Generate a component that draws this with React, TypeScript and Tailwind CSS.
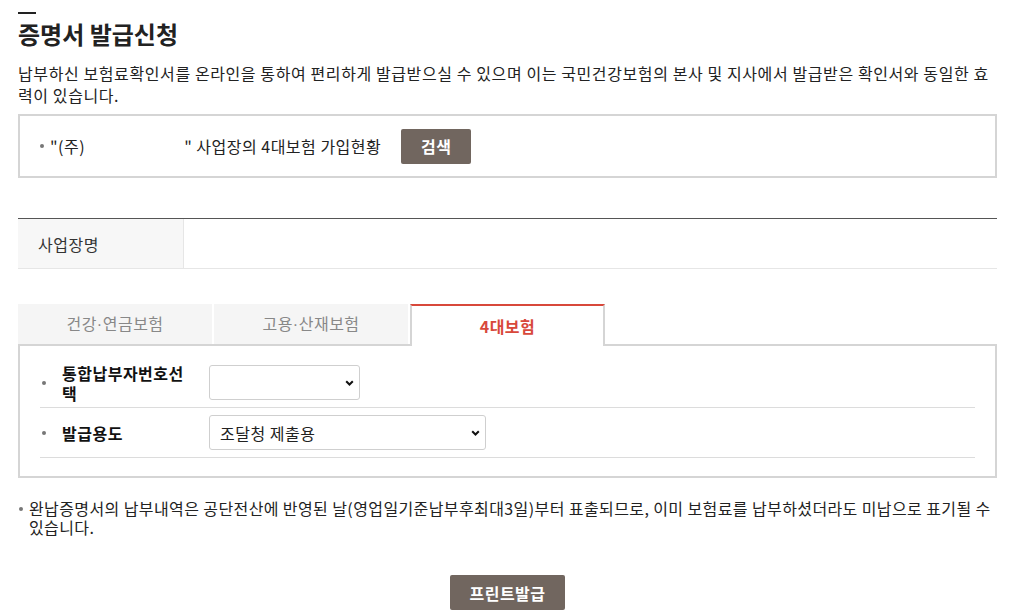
import { useState } from 'react'

const FONT = { fontFamily: '"Noto Sans CJK KR", "Noto Sans", sans-serif' }

const Chevron = () => (
  <svg width="9" height="6" viewBox="0 0 9 6" className="pointer-events-none absolute right-[6px] top-1/2 -translate-y-1/2">
    <path d="M1.2 1.2 L4.5 4.5 L7.8 1.2" fill="none" stroke="#111" strokeWidth="2" />
  </svg>
)

const Select = ({ width, value, options }: { width: string; value: string; options: string[] }) => (
  <div className={`relative ${width}`}>
    <select
      defaultValue={value}
      className="h-[35px] w-full appearance-none rounded-[3px] border border-[#cfcfcf] bg-white pl-[10px] pr-[24px] text-[16px] tracking-[0.5px] text-[#222] outline-none"
      style={FONT}
    >
      {options.map((o) => (
        <option key={o}>{o}</option>
      ))}
    </select>
    <Chevron />
  </div>
)

const Dot = () => <span className="inline-block h-[4px] w-[4px] shrink-0 rounded-full bg-[#777]" />

// narrow middle dot (CJK font draws it full width)
const Mid = () => <span style={{ fontFamily: '"Liberation Sans", sans-serif' }}>·</span>

export default function App() {
  const [tab, setTab] = useState(2)
  const tabs = [
    <>건강<Mid />연금보험</>,
    <>고용<Mid />산재보험</>,
    <>4대보험</>,
  ]

  return (
    <div className="ml-[18px] w-[979px] pt-[12px] text-[16px] tracking-[0.5px] text-[#222]" style={FONT}>
      <div className="h-[2px] w-[18px] bg-[#222]" />
      <h1 className="mt-[6px] text-[24px] font-bold leading-[28px] tracking-normal text-[#222]">증명서 발급신청</h1>
      <p className="mt-[14px] leading-[22px] tracking-[0.6px]">
        납부하신 보험료확인서를 온라인을 통하여 편리하게 발급받으실 수 있으며 이는 국민건강보험의 본사 및 지사에서 발급받은 확인서와 동일한 효력이 있습니다.
      </p>

      <div className="mt-[8px] flex h-[64px] items-center border-2 border-[#d5d5d5] pl-[20px]">
        <Dot />
        <span className="ml-[6px] leading-[20px]">"(주)</span>
        <span className="w-[99px]" />
        <span className="leading-[20px]">" 사업장의 4대보험 가입현황</span>
        <button className="ml-[20px] h-[35px] w-[70px] rounded-[2px] bg-[#71665f] font-bold text-white">
          검색
        </button>
      </div>

      <div className="mt-[40px] flex h-[51px] border-t border-b border-t-[#555] border-b-[#e6e6e6]">
        <div className="flex w-[166px] items-center border-r border-[#e6e6e6] bg-[#f7f7f7] pl-[20px] text-[#333]">
          사업장명
        </div>
        <div className="flex-1" />
      </div>

      <div className="mt-[35px] flex gap-[2px]">
        {tabs.map((t, i) =>
          i === tab ? (
            <button
              key={i}
              onClick={() => setTab(i)}
              className="relative z-10 -mb-[2px] h-[42px] w-[195px] border-x-2 border-t-2 border-x-[#d5d5d5] border-t-[#d8483b] bg-white font-bold text-[#d8483b]"
            >
              {t}
            </button>
          ) : (
            <button
              key={i}
              onClick={() => setTab(i)}
              className="h-[40px] w-[194px] bg-[#f5f5f5] text-[#888]"
            >
              {t}
            </button>
          ),
        )}
      </div>

      <div className="border-2 border-[#d5d5d5] px-[20px] pt-[12px] pb-[18px]">
        <div className="flex min-h-[50px] items-center border-b border-[#dcdcdc]">
          <div className="flex w-[169px] items-center pl-[2px]">
            <Dot />
            <span className="ml-[16px] w-[124px] font-bold leading-[20px] text-[#111]">통합납부자번호선택</span>
          </div>
          <Select width="w-[151px]" value="" options={['']} />
        </div>
        <div className="flex min-h-[50px] items-center border-b border-[#dcdcdc]">
          <div className="flex w-[169px] items-center pl-[2px]">
            <Dot />
            <span className="ml-[16px] font-bold leading-[20px] text-[#111]">발급용도</span>
          </div>
          <Select width="w-[277px]" value="조달청 제출용" options={['조달청 제출용', '일반 제출용']} />
        </div>
      </div>

      <div className="mt-[21px] flex leading-[19px] tracking-[0.4px]">
        <span className="flex h-[19px] items-center pl-[1px] pr-[6px]">
          <Dot />
        </span>
        <p>
          완납증명서의 납부내역은 공단전산에 반영된 날(영업일기준납부후최대3일)부터 표출되므로, 이미 보험료를 납부하셨더라도 미납으로 표기될 수 있습니다.
        </p>
      </div>

      <div className="mt-[38px] flex justify-center">
        <button className="h-[35px] w-[115px] rounded-[2px] bg-[#71665f] font-bold text-white">
          프린트발급
        </button>
      </div>
    </div>
  )
}
